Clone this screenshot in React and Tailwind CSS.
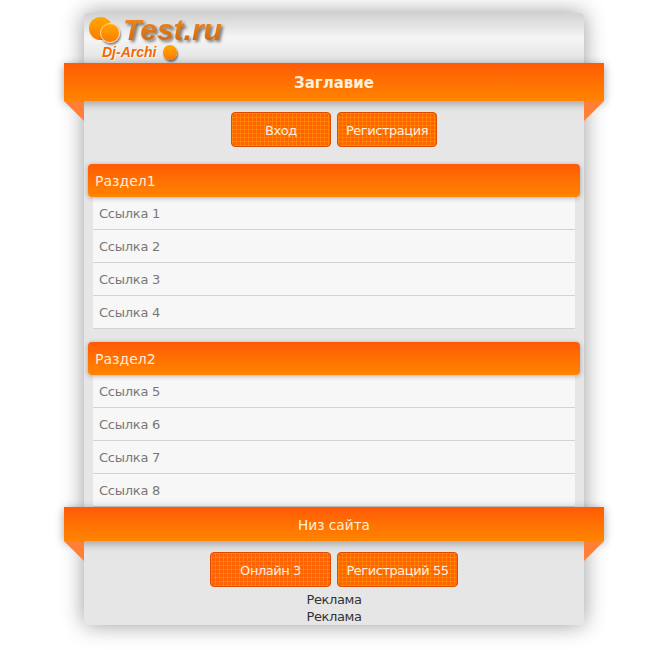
const SECTIONS = [
  { title: "Раздел1", links: ["Ссылка 1", "Ссылка 2", "Ссылка 3", "Ссылка 4"] },
  { title: "Раздел2", links: ["Ссылка 5", "Ссылка 6", "Ссылка 7", "Ссылка 8"] },
];

function PatternButton({ className, children }) {
  return (
    <div
      className={`flex h-[35px] items-center justify-center rounded border border-[#e04c00] bg-[#ff6200] bg-[linear-gradient(rgba(255,140,0,0.75)_1px,transparent_1px),linear-gradient(90deg,rgba(255,140,0,0.75)_1px,transparent_1px)] bg-[size:4px_4px] pt-[2px] text-[13px] tracking-[-0.45px] text-[#ffeedd] ${className}`}
    >
      {children}
    </div>
  );
}

function Ribbon({ className, children }) {
  return (
    <div className={`relative z-10 -mx-5 flex items-center justify-center bg-gradient-to-b from-[#ff5a05] to-[#ff8400] pt-[3px] text-[#fff0dc] shadow-[0_2px_9px_rgba(0,0,0,0.35)] ${className}`}>
      {children}
      <div className="absolute left-0 top-full h-5 w-5 bg-[#ff7f37] [clip-path:polygon(0_0,100%_0,100%_100%)]" />
      <div className="absolute right-0 top-full h-5 w-5 bg-[#ff7f37] [clip-path:polygon(0_0,100%_0,0_100%)]" />
    </div>
  );
}

function Logo() {
  return (
    <div className="relative h-[50px] shrink-0">
      <div className="absolute left-[5px] top-[4px] h-[23px] w-[23px] rounded-full bg-gradient-to-b from-[#ffa800] to-[#ff7a00]" />
      <div className="absolute left-[16px] top-[10px] h-[20px] w-[20px] rounded-full border border-[#ffd9a0] bg-gradient-to-b from-[#ffa800] to-[#ff7a00] shadow-[1px_2px_2px_rgba(0,0,0,0.45)]" />
      <span className="absolute left-[39px] top-[-1px] bg-gradient-to-b from-[#f5901f] to-[#c9600f] bg-clip-text pr-1 font-['Liberation_Sans',sans-serif] text-[30px] font-bold italic leading-[36px] text-transparent drop-shadow-[2px_2px_1.5px_rgba(0,0,0,0.5)]">
        Test.ru
      </span>
      <span className="absolute left-[18px] top-[31px] font-['Liberation_Sans',sans-serif] text-[14px] font-bold italic leading-[16px] text-[#f26a00] [text-shadow:1px_1px_1px_rgba(255,255,255,0.9),-1px_0_1px_rgba(255,255,255,0.6)]">
        Dj-Archi
      </span>
      <div className="absolute left-[79px] top-[32px] h-[15px] w-[14px] rounded-full bg-gradient-to-b from-[#ffa800] to-[#ff7a00] shadow-[1px_2px_2px_rgba(0,0,0,0.5)]" />
    </div>
  );
}

export default function App() {
  return (
    <div className="min-h-[650px] bg-white pb-[25px] pt-[13px] font-['DejaVu_Sans',sans-serif]">
      <div className="mx-auto flex w-[500px] flex-col rounded bg-[#e6e6e6] shadow-[0_0_22px_rgba(0,0,0,0.4)]">
        <div className="rounded-t bg-gradient-to-b from-[#d2d2d2] via-[#f5f5f5] to-[#e2e2e2]">
          <Logo />
        </div>

        <Ribbon className="h-[38px] text-[15px] font-bold">Заглавие</Ribbon>

        <div className="mt-[11px] flex justify-center gap-[6px]">
          <PatternButton className="w-[100px]">Вход</PatternButton>
          <PatternButton className="w-[100px]">Регистрация</PatternButton>
        </div>

        <div className="mt-[17px] flex flex-col gap-[13px]">
          {SECTIONS.map((section) => (
            <div key={section.title}>
              <div className="relative z-[1] mx-1 flex h-[33px] items-center rounded bg-gradient-to-b from-[#ff5a05] to-[#ff8400] px-[7px] pt-[2px] text-[14px] text-[#ffecd6] shadow-[0_1px_5px_rgba(0,0,0,0.3)]">
                {section.title}
              </div>
              <div className="mx-[9px] bg-[#f7f7f7]">
                {section.links.map((link) => (
                  <div
                    key={link}
                    className="flex h-[33px] items-center border-b border-[#d2d2d2] pl-[6px] pt-[2px] text-[13px] tracking-[-0.25px] text-[#777777]"
                  >
                    {link}
                  </div>
                ))}
              </div>
            </div>
          ))}
        </div>

        <Ribbon className="h-[34px] text-[13.7px]">Низ сайта</Ribbon>

        <div className="mt-[11px] flex justify-center gap-[6px]">
          <PatternButton className="w-[121px]">Онлайн 3</PatternButton>
          <PatternButton className="w-[121px]">Регистраций 55</PatternButton>
        </div>

        <div className="flex h-[38px] flex-col items-center pt-[4px] text-[13px] leading-[17px] tracking-[-0.4px] text-[#333333]">
          <span>Реклама</span>
          <span>Реклама</span>
        </div>
      </div>
    </div>
  );
}
